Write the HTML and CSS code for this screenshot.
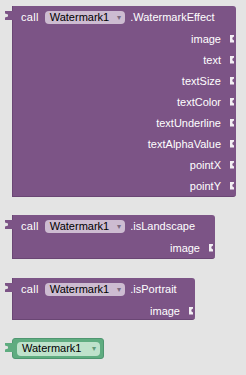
FILE: index.html
```html
<!DOCTYPE html>
<html>
<head>
<meta charset="utf-8">
<link rel="stylesheet" href="styles.css">
</head>
<body>
<div class="canvas">
  <div class="block method w1">
    <div class="head">
      <span class="kw">call</span>
      <span class="dd">Watermark1<span class="arr">▾</span></span>
      <span class="name">.WatermarkEffect</span>
    </div>
    <div class="arg"><span>image</span><i class="sock"></i></div>
    <div class="arg"><span>text</span><i class="sock"></i></div>
    <div class="arg"><span>textSize</span><i class="sock"></i></div>
    <div class="arg"><span>textColor</span><i class="sock"></i></div>
    <div class="arg"><span>textUnderline</span><i class="sock"></i></div>
    <div class="arg"><span>textAlphaValue</span><i class="sock"></i></div>
    <div class="arg"><span>pointX</span><i class="sock"></i></div>
    <div class="arg"><span>pointY</span><i class="sock"></i></div>
  </div>

  <div class="block method w2">
    <div class="head">
      <span class="kw">call</span>
      <span class="dd">Watermark1<span class="arr">▾</span></span>
      <span class="name">.isLandscape</span>
    </div>
    <div class="arg"><span>image</span><i class="sock"></i></div>
  </div>

  <div class="block method w3">
    <div class="head">
      <span class="kw">call</span>
      <span class="dd">Watermark1<span class="arr">▾</span></span>
      <span class="name">.isPortrait</span>
    </div>
    <div class="arg"><span>image</span><i class="sock"></i></div>
  </div>

  <div class="block comp">
    <span class="dd gdd">Watermark1<span class="arr">▾</span></span>
  </div>
</div>
</body>
</html>
```

FILE: styles.css
```css
html, body {
  margin: 0;
  padding: 0;
  background: #e4e4e4;
  font-family: "Liberation Sans", Arial, sans-serif;
}
.canvas {
  display: flex;
  flex-direction: column;
  align-items: flex-start;
  padding: 6px 0 0 12px;
  height: 375px;
  box-sizing: border-box;
}
.block {
  position: relative;
  box-sizing: border-box;
  border-radius: 0 3px 3px 0;
}
.method {
  background: #7c5486;
  border-bottom: 1px solid #6a4674;
  border-left: 1px solid #6a4674;
  color: #fff;
  font-size: 11px;
  padding: 0 2px 0 8px;
}
.method::before {
  content: "";
  position: absolute;
  left: -8px;
  top: 5px;
  width: 8px;
  height: 9px;
  background: #7c5486;
  clip-path: polygon(0 0, 100% 0, 100% 100%, 0 100%, 0 72%, 3px 60%, 3px 40%, 0 28%);
}
.w1 { width: 224px; height: 191px; margin-bottom: 18px; }
.w2 { width: 203px; height: 44px; margin-bottom: 19px; }
.w3 { width: 183px; height: 42px; margin-bottom: 18px; }
.head {
  display: flex;
  align-items: center;
  height: 22px;
  gap: 6px;
}
.kw { letter-spacing: 0.3px; }
.dd {
  display: inline-flex;
  align-items: center;
  height: 13px;
  padding: 0 4px 0 5px;
  background: #cdbcd1;
  border-radius: 4px;
  color: #000;
  font-size: 11px;
  line-height: 13px;
}
.arr {
  color: #7a6a80;
  font-size: 8px;
  margin-left: 8px;
}
.name { margin-left: -1px; }
.arg {
  display: flex;
  justify-content: flex-end;
  align-items: center;
  height: 21px;
}
.sock {
  display: block;
  width: 4px;
  height: 8px;
  margin-left: 9px;
  background: #f2eef3;
  clip-path: polygon(0 0, 100% 0, 100% 25%, 60% 40%, 60% 60%, 100% 75%, 100% 100%, 0 100%);
}
.comp {
  width: 92px;
  height: 21px;
  background: #5fac80;
  border: 1px solid #4f9670;
  border-radius: 3px;
  display: flex;
  align-items: center;
  padding-left: 4px;
}
.comp::before {
  content: "";
  position: absolute;
  left: -8px;
  top: 4px;
  width: 8px;
  height: 9px;
  background: #5fac80;
  clip-path: polygon(0 0, 100% 0, 100% 100%, 0 100%, 0 72%, 3px 60%, 3px 40%, 0 28%);
}
.gdd {
  background: #bfe2cb;
  height: 14px;
  padding: 0 4px 0 5px;
}
.gdd .arr { color: #5f9a78; margin-left: 10px; }
```
